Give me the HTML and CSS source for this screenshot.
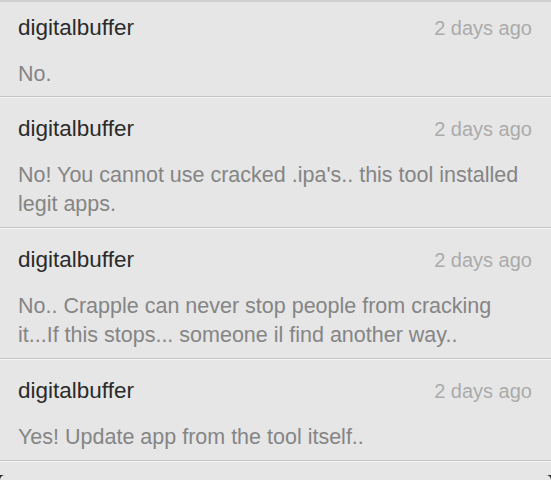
FILE: index.html
```html
<!DOCTYPE html>
<html>
<head>
<meta charset="utf-8">
<link rel="stylesheet" href="styles.css">
</head>
<body>
<div class="list">
  <div class="comment first">
    <div class="head"><span class="name">digitalbuffer</span><span class="date">2 days ago</span></div>
    <div class="body">No.</div>
  </div>
  <div class="comment">
    <div class="head"><span class="name">digitalbuffer</span><span class="date">2 days ago</span></div>
    <div class="body">No! You cannot use cracked .ipa's.. this tool installed<br>legit apps.</div>
  </div>
  <div class="comment">
    <div class="head"><span class="name">digitalbuffer</span><span class="date">2 days ago</span></div>
    <div class="body">No.. Crapple can never stop people from cracking<br>it...If this stops... someone il find another way..</div>
  </div>
  <div class="comment">
    <div class="head"><span class="name">digitalbuffer</span><span class="date">2 days ago</span></div>
    <div class="body">Yes! Update app from the tool itself..</div>
  </div>
  <div class="tail"></div>
</div>
<div class="next"></div>
</body>
</html>
```
FILE: styles.css
```css
html, body {
  margin: 0;
  padding: 0;
  height: 100%;
}
body {
  background: #2a2a2a;
  font-family: "Liberation Sans", Arial, sans-serif;
  overflow: hidden;
  display: flex;
  flex-direction: column;
}
.list {
  background: #e6e6e6;
  border-top: 2px solid #cfcfcf;
}
.comment {
  padding: 17px 14px 8px 18px;
  border-bottom: 1px solid #c4c4c4;
  box-shadow: 0 1px 0 #f6f6f6;
  margin-bottom: 1px;
}
.comment.first {
  padding-top: 12px;
  padding-bottom: 7px;
}
.head {
  display: flex;
  justify-content: space-between;
  align-items: center;
  height: 28px;
  margin-bottom: 18px;
  padding-right: 5px;
}
.name {
  font-size: 22.5px;
  color: #2b2b2b;
}
.date {
  font-size: 20px;
  color: #ababab;
}
.body {
  font-size: 21.5px;
  line-height: 29px;
  color: #858585;
}
.tail {
  height: 13px;
}
.next {
  flex: 1;
  background: #e6e6e6;
  border-radius: 5px 5px 0 0;
}
```
